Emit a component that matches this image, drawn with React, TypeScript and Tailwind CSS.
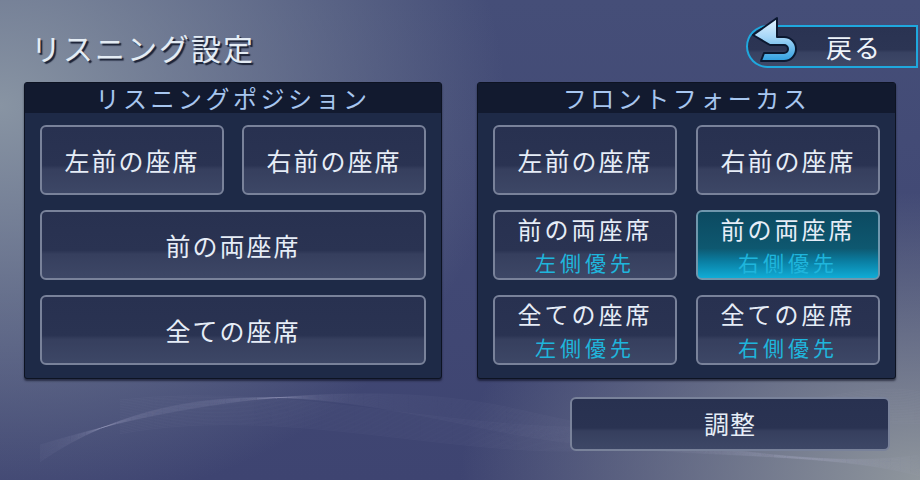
import React from "react";

type Seat = { main: string; sub?: string; active?: boolean };

const listening: Seat[][] = [
  [{ main: "左前の座席" }, { main: "右前の座席" }],
  [{ main: "前の両座席" }],
  [{ main: "全ての座席" }],
];

const focus: Seat[] = [
  { main: "左前の座席" },
  { main: "右前の座席" },
  { main: "前の両座席", sub: "左側優先" },
  { main: "前の両座席", sub: "右側優先", active: true },
  { main: "全ての座席", sub: "左側優先" },
  { main: "全ての座席", sub: "右側優先" },
];

function SeatButton({ seat }: { seat: Seat }) {
  const bg = seat.active
    ? "bg-[linear-gradient(180deg,#0c4a61_0%,#0e5870_55%,#0a7fa3_75%,#10acd6_100%)] border-[#6f97ad]"
    : "bg-[linear-gradient(180deg,#283150_0%,#2a3352_58%,#363f5e_64%,#3d4766_100%)] border-[#79829a]";
  return (
    <button
      className={`flex h-[70px] w-full flex-col items-center justify-center rounded-md border-2 ${bg}`}
    >
      {seat.sub ? (
        <>
          <span className="text-[24px] leading-[28px] tracking-[3px] text-[#e6edf7]">{seat.main}</span>
          <span className="mt-[7px] text-[21px] leading-[25px] tracking-[4px] text-[#1fb5dc]">{seat.sub}</span>
        </>
      ) : (
        <span className="text-[25px] leading-[30px] tracking-[2px] text-[#e6edf7]">{seat.main}</span>
      )}
    </button>
  );
}

function Panel({ title, width, children }: { title: string; width: string; children: React.ReactNode }) {
  return (
    <section
      className={`${width} h-[297px] rounded-[3px] border border-[#0d1322] bg-[#1e2a47] shadow-[0_2px_2px_rgba(10,14,30,0.6)]`}
    >
      <h2 className="flex h-[30px] items-center justify-center bg-[#121a2f] text-[24px] tracking-[3.5px] text-[#a7c6ef]">
        {title}
      </h2>
      <div className="px-[15px] pt-[12px]">{children}</div>
    </section>
  );
}

function BackArrow() {
  return (
    <svg className="absolute left-[2px] top-[-11px]" width="54" height="50" viewBox="0 0 54 50">
      <defs>
        <linearGradient id="arrowFill" x1="0" y1="0" x2="0" y2="1">
          <stop offset="0%" stopColor="#e4f3ff" />
          <stop offset="45%" stopColor="#a6d6f7" />
          <stop offset="100%" stopColor="#2e9fe0" />
        </linearGradient>
      </defs>
      <path
        d="M3 19 L27 2 L27 21 L34 21 A12 12 0 0 1 34 45 L11 45 L14 37 L34 37 A4 4 0 0 0 34 29 L20 29 Z"
        fill="url(#arrowFill)"
        stroke="#0b1830"
        strokeWidth="2"
        strokeLinejoin="round"
      />
    </svg>
  );
}

function Waves() {
  const lines = Array.from({ length: 22 });
  return (
    <svg className="pointer-events-none absolute inset-0" width="920" height="480" viewBox="0 0 920 480">
      {lines.map((_, i) => (
        <path
          key={`a${i}`}
          d={`M40 ${445 + i * 0.8} C 200 ${395 - i * 2}, 380 ${378 + i * 1.5}, 520 ${410 + i * 1.2} S 820 ${470 - i}, 920 ${455 + i}`}
          fill="none"
          stroke="#c8d2e6"
          strokeOpacity="0.035"
          strokeWidth="1"
        />
      ))}
      {lines.map((_, i) => (
        <path
          key={`b${i}`}
          d={`M120 ${400 + i * 1.6} C 300 ${380 + i}, 480 ${440 + i * 1.4}, 640 ${425 + i} S 860 ${380 + i * 2}, 920 ${392 + i * 1.5}`}
          fill="none"
          stroke="#c8d2e6"
          strokeOpacity="0.035"
          strokeWidth="1"
        />
      ))}
    </svg>
  );
}

export default function App() {
  return (
    <div
      className="relative h-[480px] w-[920px] overflow-hidden bg-[radial-gradient(ellipse_55%_85%_at_0%_22%,#8894a3_0%,rgba(136,148,163,0)_100%),radial-gradient(ellipse_50%_60%_at_100%_100%,#8f969d_0%,rgba(143,150,157,0)_100%),linear-gradient(180deg,#454e78_0%,#3e4471_100%)] font-['Noto_Sans_CJK_JP','Noto_Sans',sans-serif]"
    >
      <Waves />

      <div className="relative flex h-[82px] items-start justify-between">
        <h1 className="pl-[31px] pt-[27px] text-[30px] leading-[40px] tracking-[2px] text-[#e4ecf4] [text-shadow:2px_2px_1px_#1b2236]">
          リスニング設定
        </h1>
        <button className="relative mr-[2px] mt-[25px] flex h-[43px] w-[172px] items-center justify-end rounded-l-full rounded-r-[2px] border-2 border-[#1fa8de] bg-[linear-gradient(180deg,#2a3352_0%,#2c3554_58%,#384262_66%,#3e4867_100%)] pr-[34px]">
          <BackArrow />
          <span className="text-[26px] leading-[30px] tracking-[2px] text-[#eef3fa]">戻る</span>
        </button>
      </div>

      <div className="relative flex gap-[35px] px-[24px]">
        <Panel title="リスニングポジション" width="w-[418px]">
          <div className="flex flex-col gap-[15px]">
            {listening.map((row, r) => (
              <div key={r} className="grid grid-cols-[repeat(auto-fit,minmax(0,1fr))] gap-[18px]">
                {row.map((seat) => (
                  <SeatButton key={seat.main} seat={seat} />
                ))}
              </div>
            ))}
          </div>
        </Panel>

        <Panel title="フロントフォーカス" width="w-[419px]">
          <div className="grid grid-cols-2 gap-x-[19px] gap-y-[15px]">
            {focus.map((seat, i) => (
              <SeatButton key={i} seat={seat} />
            ))}
          </div>
        </Panel>
      </div>

      <div className="relative flex justify-end pr-[30px] pt-[18px]">
        <button className="flex h-[54px] w-[320px] items-center justify-center rounded-md border-2 border-[#79829a] bg-[linear-gradient(180deg,#283150_0%,#2a3352_58%,#363f5e_64%,#3d4766_100%)]">
          <span className="text-[25px] tracking-[1px] text-[#e6edf7]">調整</span>
        </button>
      </div>
    </div>
  );
}
